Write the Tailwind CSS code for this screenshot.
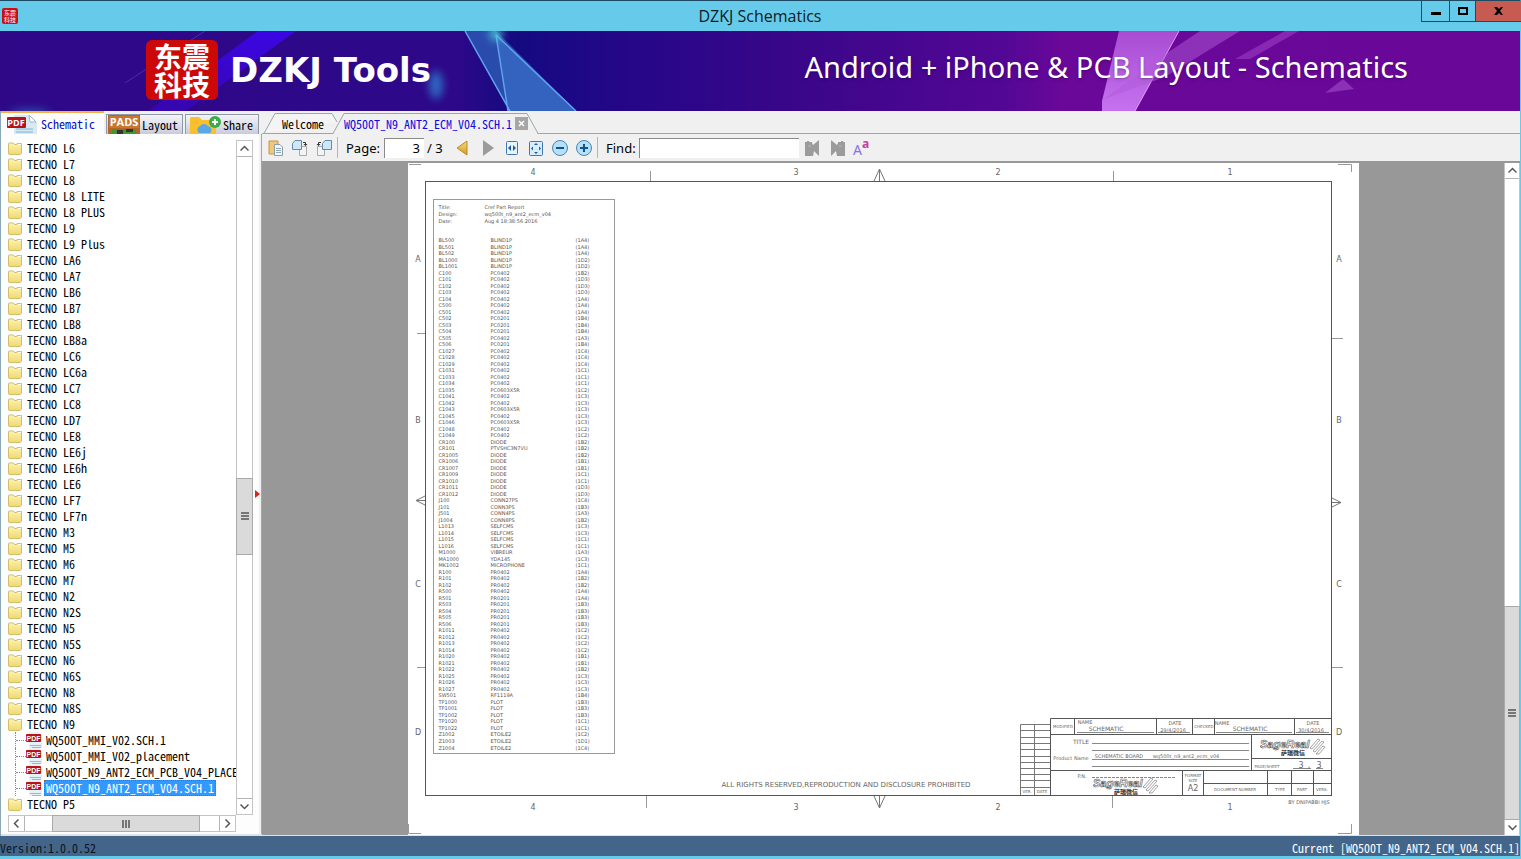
<!DOCTYPE html>
<html lang="en">
<head>
    <meta charset="UTF-8">
    <meta name="viewport" content="width=device-width, initial-scale=1.0">
    <title>DZKJ Schematics</title>
    <script src="https://cdn.jsdelivr.net/npm/@tailwindcss/browser@4"></script>
</head>
<body class="bg-[#66cbea] font-['Noto_Sans_Mono_CJK_SC','Noto_Sans_CJK_SC',monospace] text-[12px] leading-[16px] text-black">

    <!-- shared icons -->
    <svg class="absolute h-0 w-0">
        <linearGradient id="folder-fill" x1="0" y1="0" x2="0" y2="1">
            <stop offset="0" stop-color="#fbf3b8"/>
            <stop offset="1" stop-color="#f0d96c"/>
        </linearGradient>
        <linearGradient id="beam" x1="0" y1="0" x2="0" y2="1">
            <stop offset="0" stop-color="#3c06e4"/>
            <stop offset="1" stop-color="#3606ae"/>
        </linearGradient>
        <linearGradient id="pink" x1="0" y1="0" x2="0" y2="1">
            <stop offset="0" stop-color="#a94cd2"/>
            <stop offset="1" stop-color="#c472f0"/>
        </linearGradient>
        <linearGradient id="gold" x1="0" y1="0" x2="0" y2="1">
            <stop offset="0" stop-color="#f7dc7c"/>
            <stop offset="1" stop-color="#d39a1c"/>
        </linearGradient>
        <filter id="soft" x="-100%" y="-100%" width="300%" height="300%"><feGaussianBlur stdDeviation="4"/></filter>
        <symbol id="folder" viewBox="0 0 14 13">
            <path d="M.5 1.5Q.5 1 1 1H5.500L6.500 2.500H9V1.500H13.500V11L12 12.500H1L.5 12Z" fill="url(#folder-fill)" stroke="#d3bf6a"/>
            <path d="M9.500 2.500H13" stroke="#fffbe0"/>
        </symbol>
        <symbol id="pdf" viewBox="0 0 17 16">
            <path d="M3 0H13L16 3V16H3Z" fill="#e4f1f8"/>
            <path d="M4 13.500H15M6 15.500H15" stroke="#8bbdd8"/>
            <rect x="0" y="2" width="15" height="8" rx="1" fill="#b8121a"/>
            <text x="7.500" y="8.500" text-anchor="middle" font-family="Liberation Sans" font-weight="bold" font-size="7" fill="#fff">PDF</text>
        </symbol>
        <symbol id="binoculars" viewBox="0 0 16 16">
            <path d="M0 2H2V1H4V2H7V3L8 5L14 0V16L9 11L8 16H0Z" fill="#9b9b9b"/>
            <path d="M3 6H6" stroke="#b9b9b9"/>
        </symbol>
        <symbol id="sagereal" viewBox="0 0 66 18">
            <text x="0" y="10" font-family="Liberation Sans" font-style="italic" font-weight="bold" font-size="11" fill="#fff" stroke="#555" stroke-width=".6">SageReal</text>
            <text x="21" y="17" font-family="Noto Sans CJK SC" font-weight="bold" font-size="6" fill="#222" stroke="none">萨瑞微信</text>
            <path d="M50 10L58 1L60 2L52 11ZM53 13L62 3L64 4L55 14ZM56 16L63 8L65 9L59 16Z" fill="#fff" stroke="#666" stroke-width=".6"/>
        </symbol>
    </svg>

    <div class="flex h-screen flex-col border-t border-r border-t-[#1c4a63] border-r-[#66cbea]">

        <!-- title bar -->
        <header class="relative flex h-[30px] shrink-0 items-center justify-between bg-[#66cbea]">
            <svg class="ml-[2px] size-4" viewBox="0 0 16 16">
                <rect width="16" height="16" rx="2" fill="#c80f14"/>
                <text x="8" y="7" text-anchor="middle" font-family="Noto Sans CJK SC" font-size="6" fill="#fff">东震</text>
                <text x="8" y="14" text-anchor="middle" font-family="Noto Sans CJK SC" font-size="6" fill="#fff">科技</text>
            </svg>
            <h1 class="absolute inset-x-0 text-center font-['Open_Sans',sans-serif] text-[16px] leading-[28px] text-[#0d1b24]">DZKJ Schematics</h1>
            <div class="relative -mr-px flex h-[21px] self-start border-b border-l border-[#24485a]">
                <button aria-label="Minimize" class="flex w-[28px] items-center justify-center border-r border-[#24485a]">
                    <svg class="h-3 w-3" viewBox="0 0 12 12"><path d="M1 7H11V10H1Z"/></svg>
                </button>
                <button aria-label="Maximize" class="flex w-[26px] items-center justify-center border-r border-[#24485a]">
                    <svg class="h-3 w-3" viewBox="0 0 12 12"><path d="M2 3H10V9H2Z" fill="none" stroke="#000" stroke-width="2"/></svg>
                </button>
                <button aria-label="Close" class="flex w-[45px] items-center justify-center bg-[#c75b51]">
                    <svg class="h-3 w-3" viewBox="0 0 12 12"><path d="M1 2H4L6 4L8 2H10L7 6L10 10H8L6 8L4 10H1L4 6Z"/></svg>
                </button>
            </div>
        </header>

        <!-- banner -->
        <div class="relative flex h-[80px] shrink-0 items-center justify-between overflow-hidden bg-[#2c0887] pr-28 pl-[146px]">
            <svg class="absolute inset-0 h-full w-full" viewBox="0 0 1520 80" preserveAspectRatio="none">
                <linearGradient id="sky">
                    <stop offset="0" stop-color="#2f0888"/>
                    <stop offset=".3" stop-color="#2d0888"/>
                    <stop offset=".34" stop-color="#140a80"/>
                    <stop offset=".4" stop-color="#220787"/>
                    <stop offset=".52" stop-color="#390689"/>
                    <stop offset=".66" stop-color="#530795"/>
                    <stop offset=".7" stop-color="#6a0899"/>
                    <stop offset="1" stop-color="#690898"/>
                </linearGradient>
                <rect width="1520" height="80" fill="url(#sky)"/>
                <path d="M258 0H296L186 80H148Z" fill="url(#beam)"/>
                <path d="M205 0L125 52" stroke="#5b46c4" opacity=".6"/>
                <ellipse cx="436" cy="54" rx="7" ry="14" fill="#2f80d0" opacity=".8" filter="url(#soft)"/>
                <ellipse cx="30" cy="82" rx="20" ry="4" fill="#2f6cc4" opacity=".7" filter="url(#soft)"/>
                <path d="M465 0H496L576 80H509Z" fill="#2b57b4" opacity=".85"/>
                <path d="M496 5L508 80H576Z" fill="#3b73cc" opacity=".6"/>
                <path d="M465 0L510 80M496 4L508 80M496 4L576 80" fill="none" stroke="#5fa2ee" stroke-width="1.500"/>
                <circle cx="496" cy="3" r="6" fill="#4fd0d8" filter="url(#soft)"/>
                <path d="M1119 0H1179L1135 80H1102V70Z" fill="url(#pink)"/>
                <path d="M1179 0L1135 80" stroke="#e39af8"/>
                <path d="M1200 0H1240L1165 46L1104 68L1170 20Z" fill="#b25ad8" opacity=".5"/>
                <path d="M1285 0H1299L1250 28L1235 28Z" fill="#b25ad8" opacity=".4"/>
                <path d="M1325 62L1343 48L1354 58Z" fill="#a04cc8" opacity=".6"/>
            </svg>
            <div class="relative flex items-center gap-[12px] pb-[2px]">
                <div class="grid h-[60px] w-[72px] place-content-center rounded-md bg-[#cc0808] text-center font-['Noto_Sans_CJK_SC',sans-serif] text-[28px] leading-[28px] font-bold text-white">东震<br>科技</div>
                <span class="font-['DejaVu_Sans',sans-serif] text-[34px] leading-[60px] font-bold text-white">DZKJ Tools</span>
            </div>
            <span class="relative pb-2 font-['Noto_Sans',sans-serif] text-[29px] leading-[60px] text-white text-shadow-md">Android + iPhone &amp; PCB Layout - Schematics</span>
        </div>

        <main class="flex min-h-0 flex-1 bg-[#f0f0f0]">

            <!-- schematic tree -->
            <aside class="flex w-[262px] shrink-0 flex-col border-l border-[#8ba6b5]">
                <nav class="flex h-[23px] shrink-0 items-end gap-[2px] bg-[#f0f0f0]">
                    <button class="flex h-full w-[103px] items-center gap-[3px] border-t-2 border-[#f5b04a] bg-[#fcfcfe] pl-[6px] text-[#0a0ac0]">
                        <svg class="h-[20px] w-[31px]" viewBox="0 0 31 20">
                            <path d="M7 1H23L30 8V20H7Z" fill="#d9e9f3"/><path d="M22 1L29 8H23Z" fill="#fff" stroke="#9db9ca"/>
                            <path d="M9 15H26M9 18H26" stroke="#74b4d8"/>
                            <rect x="0" y="3" width="19" height="11" rx="1" fill="#b8121a"/>
                            <text x="9" y="12" text-anchor="middle" font-family="Open Sans" font-weight="bold" font-size="9" fill="#fff">PDF</text>
                        </svg>
                        Schematic
                    </button>
                    <button class="flex h-[20px] w-[77px] items-center gap-[2px] overflow-hidden border border-b-0 border-[#8d9aa8] bg-linear-to-b from-[#f4f4f9] to-[#c9cbdc] pl-px">
                        <svg class="h-[20px] w-[32px]" viewBox="0 0 32 20">
                            <rect width="32" height="20" fill="#b5652a"/><rect x="1" y="1" width="30" height="12" fill="#c9772f"/>
                            <text x="16" y="11" text-anchor="middle" font-family="Open Sans" font-weight="bold" font-size="11" fill="#fff">PADS</text>
                            <path d="M4 14H28V20H4Z" fill="#3c9a2c"/><path d="M9 15H15V20H9ZM18 14H25V17H18Z" fill="#333"/>
                        </svg>
                        Layout
                    </button>
                    <button class="flex h-[20px] w-[74px] items-center gap-[2px] overflow-hidden border border-b-0 border-[#8d9aa8] bg-linear-to-b from-[#f4f4f9] to-[#c9cbdc] pl-[4px]">
                        <svg class="h-[20px] w-[31px]" viewBox="0 0 31 20">
                            <path d="M0 3Q0 2 1 2H9L12 5H26V20H0Z" fill="#f9bf2c"/>
                            <path d="M9 18A4 4 0 0 1 10 11A5 5 0 0 1 18 11A4 4 0 0 1 20 18Z" fill="#56a8e8"/>
                            <circle cx="25" cy="7" r="6" fill="#3cab4a"/><path d="M25 4V10M22 7H28" stroke="#fff" stroke-width="2"/>
                        </svg>
                        Share
                    </button>
                </nav>

                <div class="flex min-h-0 flex-1 border-b-2 border-[#dfe3e6]">
                    <div class="flex min-w-0 flex-1 flex-col bg-[#fdfdfe] pt-[6px] pb-[2px] pl-[7px]">
                        <div class="flex min-h-0 flex-1 pr-[6px]">
                            <ul id="tree" class="min-w-0 flex-1 overflow-hidden bg-white whitespace-nowrap"></ul>
                            <div class="relative flex w-[17px] flex-col justify-between border border-[#c4c4c4] bg-white">
                                <button aria-label="Scroll up" class="grid h-4 place-items-center border-b border-[#b4b4b4]"><svg class="size-[9px]" viewBox="0 0 9 9"><path d="M0.500 6.500L4.500 2.500L8.500 6.500" fill="none" stroke="#555" stroke-width="1.500"/></svg></button>
                                <div class="absolute -inset-x-px top-1/2 h-[77px] border border-[#aaa] bg-[#dadada]"><svg class="mx-auto mt-[33px] size-[8px]" viewBox="0 0 8 8"><path d="M0 1H8M0 4H8M0 7H8" stroke="#555" stroke-width="1.500"/></svg></div>
                                <button aria-label="Scroll down" class="grid h-4 place-items-center border-t border-[#b4b4b4]"><svg class="size-[9px]" viewBox="0 0 9 9"><path d="M0.500 2.500L4.500 6.500L8.500 2.500" fill="none" stroke="#555" stroke-width="1.500"/></svg></button>
                            </div>
                        </div>
                        <div class="mr-[23px] flex h-[17px] shrink-0 border border-[#c4c4c4] bg-white">
                            <button aria-label="Scroll left" class="grid w-4 place-items-center border-r border-[#b4b4b4]"><svg class="size-[9px]" viewBox="0 0 9 9"><path d="M6.500 0.500L2.500 4.500L6.500 8.500" fill="none" stroke="#555" stroke-width="1.500"/></svg></button>
                            <div class="-my-px ml-[27px] grid w-[148px] place-items-center border border-[#aaa] bg-[#dadada]"><svg class="size-[8px]" viewBox="0 0 8 8"><path d="M1 0V8M4 0V8M7 0V8" stroke="#555" stroke-width="1.500"/></svg></div>
                            <button aria-label="Scroll right" class="ml-auto grid w-4 place-items-center border-l border-[#b4b4b4]"><svg class="size-[9px]" viewBox="0 0 9 9"><path d="M2.500 0.500L6.500 4.500L2.500 8.500" fill="none" stroke="#555" stroke-width="1.500"/></svg></button>
                        </div>
                    </div>
                    <div class="flex w-[3px] items-center border-r border-[#9aa9b2] bg-[#f0f0f0]">
                        <svg class="relative right-[4px] mt-[20px] h-[8px] w-[5px] shrink-0" viewBox="0 0 5 8"><path d="M0 0L5 4L0 8Z" fill="#d8241c"/></svg>
                    </div>
                </div>
            </aside>

            <section class="flex min-w-0 flex-1 flex-col">
                <!-- document tabs -->
                <nav class="relative flex h-[23px] shrink-0 items-center border-b border-[#98a8a8] pt-[3px]">
                    <svg class="absolute top-0 left-0 h-[23px] w-[280px]" viewBox="0 0 280 23">
                        <path d="M0 22.500H2L13 2.500H70L75 11" fill="#f4f4f4" stroke="#98a8a8"/>
                        <path d="M71 22.500L82 2.500H265L276 22.500" fill="#f0f0f0" stroke="#98a8a8"/>
                        <path d="M72 22.500H275" stroke="#f0f0f0"/>
                    </svg>
                    <button class="relative ml-[20px]">Welcome</button>
                    <button class="relative ml-[20px] text-[#0a0ae0]">WQ500T_N9_ANT2_ECM_V04.SCH.1</button>
                    <button aria-label="Close tab" class="relative ml-[3px] grid size-[13px] place-items-center bg-[#a6a6a6]"><svg class="size-[7px]" viewBox="0 0 7 7"><path d="M1 1L6 6M6 1L1 6" stroke="#fff" stroke-width="1.500"/></svg></button>
                </nav>

                <!-- page toolbar -->
                <div class="flex h-[29px] shrink-0 items-center border-b-2 border-[#989898] font-['Noto_Sans',sans-serif] text-[13px]">
                    <button aria-label="Copy" class="ml-[2px] grid w-6 place-items-center">
                        <svg class="size-4" viewBox="0 0 16 16"><path d="M1 1H10V14H1Z" fill="#f1c876" stroke="#c99545"/><path d="M6.500 4.500H12L14.500 7V15.500H6.500Z" fill="#f2f7fa" stroke="#8b9dab"/><path d="M8 8.500H13M8 10.500H13M8 12.500H13" stroke="#8fa8ba"/></svg>
                    </button>
                    <button aria-label="Rotate right" class="grid w-6 place-items-center">
                        <svg class="size-4" viewBox="0 0 16 16"><path d="M7.500 6.500H14.500V15.500H7.500Z" fill="#f4f4f4" stroke="#aaa"/><path d="M.5 3.500L3 .5H9.500V9.500H.5Z" fill="#cfe6f6" stroke="#6489ac"/><path d="M11 2.500H13.500V5" fill="none" stroke="#333"/><path d="M11.500 4H15.500L13.500 6Z" fill="#333"/></svg>
                    </button>
                    <button aria-label="Rotate left" class="grid w-6 place-items-center">
                        <svg class="size-4" viewBox="0 0 16 16"><path d="M1.500 6.500H8.500V15.500H1.500Z" fill="#f4f4f4" stroke="#aaa"/><path d="M6.500 3.500L9 .5H15.500V9.500H6.500Z" fill="#cfe6f6" stroke="#6489ac"/><path d="M5 2.500H2.500V5" fill="none" stroke="#333"/><path d="M.5 4H4.500L2.500 6Z" fill="#333"/></svg>
                    </button>
                    <span class="ml-px h-[21px] border-l border-[#b5b5b5]"></span>
                    <label for="page" class="ml-2 w-[38px]">Page:</label>
                    <input id="page" value="3" class="h-[20px] w-[40px] border-t border-l border-[#8a8a8a] bg-white pr-[4px] text-right">
                    <span class="ml-[3px] w-[23px]">/ 3</span>
                    <button aria-label="Previous page" class="grid w-6 place-items-center">
                        <svg class="size-4" viewBox="0 0 16 16"><path d="M13 1V15L3 8Z" fill="url(#gold)" stroke="#b98b26"/></svg>
                    </button>
                    <button aria-label="Next page" class="ml-[2px] grid w-6 place-items-center">
                        <svg class="size-4" viewBox="0 0 16 16"><path d="M3 0V16L14 8Z" fill="#9b9b9b"/></svg>
                    </button>
                    <button aria-label="Fit width" class="grid w-6 place-items-center">
                        <svg class="size-4" viewBox="0 0 16 16"><rect x="2.500" y="1.500" width="11" height="13" rx="1" fill="#e6f3fb" stroke="#3f78ae"/><path d="M7 5V11L4 8ZM9 5V11L12 8Z" fill="#1d5e9c"/></svg>
                    </button>
                    <button aria-label="Fit page" class="grid w-6 place-items-center">
                        <svg class="size-4" viewBox="0 0 16 16"><rect x="1.500" y="1.500" width="13" height="14" rx="1" fill="#d8ecf9" stroke="#3f78ae"/><path d="M8 3L10 5H6ZM8 14L6 12H10ZM3 8.500L5 6.500V10.500ZM13 8.500L11 10.500V6.500Z" fill="#1d5e9c"/></svg>
                    </button>
                    <button aria-label="Zoom out" class="grid w-6 place-items-center">
                        <svg class="size-4" viewBox="0 0 16 16"><circle cx="8" cy="8" r="7.500" fill="#b4e0f8" stroke="#4a86b0"/><path d="M4 8H12" stroke="#11548c" stroke-width="2"/></svg>
                    </button>
                    <button aria-label="Zoom in" class="grid w-6 place-items-center">
                        <svg class="size-4" viewBox="0 0 16 16"><circle cx="8" cy="8" r="7.500" fill="#b4e0f8" stroke="#4a86b0"/><path d="M4 8H12M8 4V12" stroke="#11548c" stroke-width="2"/></svg>
                    </button>
                    <span class="ml-px h-[21px] border-l border-[#b5b5b5]"></span>
                    <label for="find" class="ml-2 w-[33px]">Find:</label>
                    <input id="find" class="h-[20px] w-[160px] border-t border-l border-[#8a8a8a] bg-white px-1">
                    <button aria-label="Find previous" class="ml-[2px] grid w-6 place-items-center"><svg class="size-4"><use href="#binoculars"/></svg></button>
                    <button aria-label="Find next" class="grid w-6 -scale-x-100 place-items-center"><svg class="size-4"><use href="#binoculars"/></svg></button>
                    <button aria-label="Match case" class="flex w-6 items-start justify-center">
                        <span class="pt-1 text-[14px] leading-[14px] text-[#8a72e8]">A</span><span class="text-[12px] leading-[10px] font-bold text-[#c0409c]">a</span>
                    </button>
                </div>

                <div class="flex min-h-0 flex-1 border-b border-[#dfe3e6]">
                    <!-- sheet -->
                    <div class="flex min-w-0 flex-1 justify-center overflow-hidden bg-[#989898]">
                        <div class="relative w-[951px] shrink-0 bg-white">
                            <svg class="absolute inset-0 h-[673px] w-[951px]" viewBox="0 0 951 673" fill="none" stroke="#555" font-family="DejaVu Sans" font-size="5">
                                <rect x="17.500" y="18.500" width="906" height="614"/>
                                <g stroke="#999">
                                    <path d="M1 1.500H13M930 1.500H943.500V9M.5 661V670.500H13M930 670.500H943.500V661"/>
                                    <path d="M242.500 8V18M705.500 8V18M238.500 633V645M704.500 633V645M9 170.500H17M9 504.500H17M924 175.500H935M924 504.500H935"/>
                                </g>
                                <path d="M466 18L471.500 6L477 18M471.500 6V18M466 633L471.500 645L477 633M471.500 645V633M17 333L8 337.500L17 342M8 337.500H17M924 335L933 339.500L924 344M933 339.500H924" stroke="#777"/>

                                <!-- title block grid -->
                                <path d="M642.500 632V555.500H923M642 571.500H923M642 607.500H923M666.500 556V571M748.500 556V571M784.500 556V571M806.500 556V571M886.500 556V571M843.500 572V607M843 595.500H923M774.500 608V632M795.500 608V632M795 620.500H923M859.500 608V632M883.500 608V632M905.500 608V632"/>
                                <path d="M612.500 632V561.500H642M626.500 562V632M612 567.500H642M612 574.500H642M612 580.500H642M612 586.500H642M612 593.500H642M612 599.500H642M612 605.500H642M612 611.500H642M612 617.500H642M612 624.500H642" stroke="#777"/>
                                <path d="M669 569.500H746M750 569.500H782M808 569.500H884M888 569.500H921M684 580.500H841M684 587.500H841M684 596.500H841M684 603.500H841M885 605.500H903M908 605.500H915" stroke="#888"/>
                                <path d="M684 614.500H768" stroke="#888" stroke-dasharray="3 1"/>

                                <g fill="#666" stroke="none" text-anchor="middle">
                                    <g font-size="8">
                                        <text x="125" y="12">4</text><text x="388" y="12">3</text><text x="590" y="12">2</text><text x="822" y="12">1</text>
                                        <text x="125" y="647">4</text><text x="388" y="647">3</text><text x="590" y="647">2</text><text x="822" y="647">1</text>
                                        <text x="10" y="99">A</text><text x="10" y="260">B</text><text x="10" y="424">C</text><text x="10" y="572">D</text>
                                        <text x="931" y="99">A</text><text x="931" y="260">B</text><text x="931" y="424">C</text><text x="931" y="572">D</text>
                                        <text x="785" y="628">A2</text><text x="893" y="605">3</text><text x="901" y="605">,</text><text x="911" y="605">3</text>
                                    </g>
                                    <text x="438" y="624" font-size="7">ALL RIGHTS RESERVED,REPRODUCTION AND DISCLOSURE PROHIBITED</text>
                                    <g font-size="6">
                                        <text x="698" y="568">SCHEMATIC</text><text x="842" y="568">SCHEMATIC</text>
                                        <text x="673" y="581">TITLE</text>
                                    </g>
                                    <text x="711" y="595">SCHEMATIC BOARD</text>
                                    <text x="677" y="561">NAME</text><text x="814" y="562">NAME</text>
                                    <text x="767" y="562">DATE</text><text x="905" y="562">DATE</text>
                                    <text x="765" y="569">29/4/2016</text><text x="903" y="569">30/4/2016</text>
                                    <text x="663" y="597">Product Name</text><text x="778" y="595">wq500t_n9_ant2_ecm_v04</text>
                                    <text x="674" y="615">P.N.</text><text x="901" y="641">BY DNIPABBI HJS</text>
                                    <g font-size="4">
                                        <text x="655" y="565">MODIFIED</text><text x="796" y="565">CHECKED</text>
                                        <text x="859" y="605">PAGE/SHEET</text>
                                        <text x="785" y="614">FORMAT</text><text x="785" y="619">SIZE</text>
                                        <text x="827" y="628">DOCUMENT NUMBER</text>
                                        <text x="872" y="628">TYPE</text><text x="894" y="628">PART</text><text x="914" y="628">VERS.</text>
                                        <text x="619" y="630">VER.</text><text x="634" y="630">DATE</text>
                                    </g>
                                </g>
                                <use href="#sagereal" x="852" y="575" width="66" height="18"/>
                                <use href="#sagereal" x="685" y="614" width="66" height="18"/>
                            </svg>

                            <div class="absolute top-[36px] left-[25px] w-[182px] border border-[#999] pt-[4px] pb-[2px] pl-[5px] font-['DejaVu_Sans',sans-serif] text-[5px] leading-[6px] text-[#555]">
                                <dl class="mb-[12px] grid grid-cols-[46px_1fr] leading-[7px]">
                                    <dt>Title:</dt><dd>Cref Part Report</dd>
                                    <dt>Design:</dt><dd>wq500t_n9_ant2_ecm_v04</dd>
                                    <dt>Date:</dt><dd>Aug 4 18:38:56 2016</dd>
                                </dl>
                                <table class="h-[514px] table-fixed">
                                    <colgroup><col class="w-[52px]"><col class="w-[85px]"><col class="w-[36px]"></colgroup>
                                    <tbody id="parts"></tbody>
                                </table>
                            </div>
                        </div>
                    </div>

                    <div class="relative flex w-[16px] shrink-0 flex-col justify-between border-x border-[#c4c4c4] bg-white">
                        <button aria-label="Scroll up" class="grid h-4 place-items-center border-b border-[#b4b4b4]"><svg class="size-[9px]" viewBox="0 0 9 9"><path d="M0.500 6.500L4.500 2.500L8.500 6.500" fill="none" stroke="#555" stroke-width="1.500"/></svg></button>
                        <div class="absolute -inset-x-px bottom-[15px] grid h-[214px] place-items-center border border-[#aaa] bg-[#dadada]"><svg class="size-[8px]" viewBox="0 0 8 8"><path d="M0 1H8M0 4H8M0 7H8" stroke="#555" stroke-width="1.500"/></svg></div>
                        <button aria-label="Scroll down" class="grid h-4 place-items-center"><svg class="size-[9px]" viewBox="0 0 9 9"><path d="M0.500 2.500L4.500 6.500L8.500 2.500" fill="none" stroke="#555" stroke-width="1.500"/></svg></button>
                    </div>
                </div>
            </section>
        </main>

        <!-- status bar -->
        <footer class="mb-[3px] flex h-[20px] shrink-0 items-end justify-between bg-[#44658a]">
            <span class="text-[#0c141c]">Version:1.0.0.52</span>
            <span class="text-white">Current [WQ500T_N9_ANT2_ECM_V04.SCH.1]</span>
        </footer>
    </div>

    <script>
        const folders = ['L6', 'L7', 'L8', 'L8 LITE', 'L8 PLUS', 'L9', 'L9 Plus', 'LA6', 'LA7', 'LB6', 'LB7', 'LB8', 'LB8a',
            'LC6', 'LC6a', 'LC7', 'LC8', 'LD7', 'LE8', 'LE6j', 'LE6h', 'LE6', 'LF7', 'LF7n', 'M3', 'M5', 'M6', 'M7',
            'N2', 'N2S', 'N5', 'N5S', 'N6', 'N6S', 'N8', 'N8S', 'N9', 'P5'];
        const files = ['WQ500T_MMI_V02.SCH.1', 'WQ500T_MMI_V02_placement', 'WQ500T_N9_ANT2_ECM_PCB_V04_PLACEMENT', 'WQ500T_N9_ANT2_ECM_V04.SCH.1'];

        const folderRow = name => `<li class="flex h-4 items-center gap-[5px]"><svg class="h-[13px] w-[14px] shrink-0"><use href="#folder"/></svg>TECNO ${name}</li>`;
        const fileRow = (name, i) => `<li class="flex h-4 items-center pl-[7px]">
            <span class="h-4 w-0 shrink-0 border-l border-dotted border-[#888]"></span>
            <span class="w-[10px] shrink-0 border-t border-dotted border-[#888]"></span>
            <svg class="h-4 w-[17px] shrink-0"><use href="#pdf"/></svg>
            <span class="${i === 3 ? 'ml-px border border-dotted border-[#a06020] bg-[#3399ff] pr-px pl-px leading-[14px] text-white' : 'ml-[3px]'}">${name}</span></li>`;

        document.getElementById('tree').innerHTML = folders
            .map(name => folderRow(name) + (name === 'N9' ? files.map(fileRow).join('') : ''))
            .join('');

        // part type: reference(location) ...
        const parts = `BLIND1P: BL500(1A4) BL501(1A4) BL502(1A4) BL1000(1D2) BL1001(1D2)
PC0402: C100(1B2) C101(1D3) C102(1D3) C103(1D3) C104(1A4) C500(1A4) C501(1A4)
PC0201: C502(1B4) C503(1B4) C504(1B4)
PC0402: C505(1A3)
PC0201: C506(1B4)
PC0402: C1027(1C4) C1028(1C4) C1029(1C4) C1031(1C1) C1033(1C1) C1034(1C1)
PC0603X5R: C1035(1C2)
PC0402: C1041(1C3) C1042(1C3)
PC0603X5R: C1043(1C3)
PC0402: C1045(1C3)
PC0603X5R: C1046(1C3)
PC0402: C1048(1C2) C1049(1C2)
DIODE: CR100(1B2)
PTVSHC3N7VU: CR101(1B2)
DIODE: CR1005(1B2) CR1006(1B1) CR1007(1B1) CR1009(1C1) CR1010(1C1) CR1011(1D3) CR1012(1D3)
CONN27PS: J100(1C4)
CONN3PS: J101(1B3)
CONN4PS: J501(1A3)
CONN8PS: J1004(1B2)
SELFCMS: L1013(1C3) L1014(1C3) L1015(1C1) L1016(1C1)
VIBREUR: M1000(1A3)
YDA145: MA1000(1C3)
MICROPHONE: MK1002(1C1)
PR0402: R100(1A4) R101(1B2) R102(1B2) R500(1A4)
PR0201: R501(1A4) R503(1B3) R504(1B3) R505(1B3) R506(1B3)
PR0402: R1011(1C2) R1012(1C2) R1013(1C2) R1014(1C2) R1020(1B1) R1021(1B1) R1022(1B2) R1025(1C3) R1026(1C3) R1027(1C3)
RF1119A: SW501(1B4)
PLOT: TP1000(1B3) TP1001(1B3) TP1002(1B3) TP1020(1C1) TP1022(1C1)
ETOILE2: Z1002(1C2) Z1003(1D1) Z1004(1C4)`;

        document.getElementById('parts').innerHTML = parts.split('\n').map(line => {
            const [type, refs] = line.split(': ');
            return refs.split(' ').map(ref => {
                const [id, place] = ref.split('(');
                return `<tr><td class="p-0">${id}</td><td class="p-0">${type}</td><td class="p-0">(${place}</td></tr>`;
            }).join('');
        }).join('');
    </script>
</body>
</html>
